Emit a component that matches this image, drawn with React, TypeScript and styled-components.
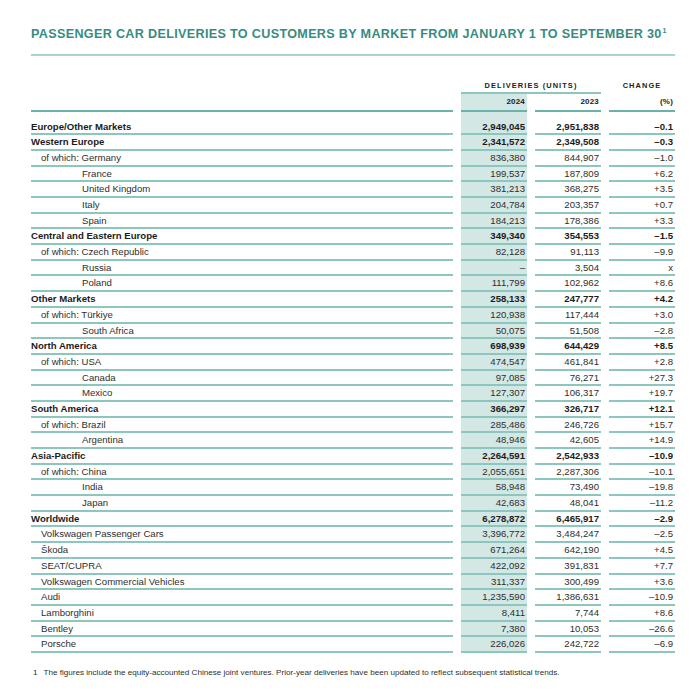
import React from "react";
import styled, { createGlobalStyle } from "styled-components";

const GlobalStyle = createGlobalStyle`
  body {
    margin: 0;
    background: #ffffff;
    font-family: "Liberation Sans", Arial, sans-serif;
    color: #2a2a2a;
  }
`;

const TEAL = "#368c81";
const LINE = "#8cc6be";
const HEAD_LINE = "#6cb2a8";
const SHADE = "#d3e7e4";

const Page = styled.div`
  width: 700px;
  box-sizing: border-box;
  padding: 27px 25px 0 31px;
`;

const Title = styled.h1`
  margin: 0;
  font-size: 12.6px;
  line-height: 15px;
  font-weight: 700;
  letter-spacing: 0.33px;
  color: ${TEAL};
  padding-bottom: 12px;
  border-bottom: 2px solid #a9d5cf;
  white-space: nowrap;
  sup {
    font-size: 7px;
    letter-spacing: 0;
    vertical-align: 5px;
    line-height: 0;
    margin-left: 1px;
  }
`;

const Grid = styled.div`
  display: grid;
  grid-template-columns: 422px 66px 66px 66px;
  column-gap: 8px;
  margin-top: 24px;
`;

const HeadCell = styled.div<{ $span?: number; $line?: boolean; $shade?: boolean; $tall?: boolean }>`
  grid-column: span ${(p) => p.$span ?? 1};
  font-size: ${(p) => (p.$tall ? "8px" : "7.4px")};
  font-weight: 700;
  letter-spacing: ${(p) => (p.$tall ? "0.2px" : "1.1px")};
  color: #222;
  text-align: ${(p) => (p.$tall ? "right" : "center")};
  line-height: ${(p) => (p.$tall ? "16px" : "12px")};
  padding: ${(p) => (p.$tall ? "0 2px 0 0" : "0")};
  background: ${(p) => (p.$shade ? SHADE : "transparent")};
  border-bottom: 2px solid ${(p) => (p.$line ? (p.$tall ? HEAD_LINE : LINE) : "transparent")};
`;

const Cell = styled.div<{ $shade?: boolean; $bold?: boolean; $num?: boolean; $indent?: number; $first?: boolean }>`
  font-size: 9.6px;
  line-height: 13.7px;
  height: 13.7px;
  white-space: nowrap;
  font-weight: ${(p) => (p.$bold ? 700 : 400)};
  color: ${(p) => (p.$bold ? "#1c1c1c" : "#2e2e2e")};
  text-align: ${(p) => (p.$num ? "right" : "left")};
  padding: ${(p) => (p.$first ? "7.6px" : "0")} ${(p) => (p.$num ? "2px" : "0")} 0
    ${(p) => p.$indent ?? 0}px;
  background: ${(p) => (p.$shade ? SHADE : "transparent")};
  border-bottom: 2px solid ${LINE};
`;

const Footnote = styled.div`
  display: flex;
  gap: 6px;
  margin-top: 15px;
  padding-left: 2px;
  font-size: 8.1px;
  line-height: 10px;
  color: #2e2e2e;
`;

type Row = [string, string, string, string, number, boolean];

// label, 2024, 2023, change, indent level, bold
const rows: Row[] = [
  ["Europe/Other Markets", "2,949,045", "2,951,838", "–0.1", 0, true],
  ["Western Europe", "2,341,572", "2,349,508", "–0.3", 0, true],
  ["of which: Germany", "836,380", "844,907", "–1.0", 1, false],
  ["France", "199,537", "187,809", "+6.2", 2, false],
  ["United Kingdom", "381,213", "368,275", "+3.5", 2, false],
  ["Italy", "204,784", "203,357", "+0.7", 2, false],
  ["Spain", "184,213", "178,386", "+3.3", 2, false],
  ["Central and Eastern Europe", "349,340", "354,553", "–1.5", 0, true],
  ["of which: Czech Republic", "82,128", "91,113", "–9.9", 1, false],
  ["Russia", "–", "3,504", "x", 2, false],
  ["Poland", "111,799", "102,962", "+8.6", 2, false],
  ["Other Markets", "258,133", "247,777", "+4.2", 0, true],
  ["of which: Türkiye", "120,938", "117,444", "+3.0", 1, false],
  ["South Africa", "50,075", "51,508", "–2.8", 2, false],
  ["North America", "698,939", "644,429", "+8.5", 0, true],
  ["of which: USA", "474,547", "461,841", "+2.8", 1, false],
  ["Canada", "97,085", "76,271", "+27.3", 2, false],
  ["Mexico", "127,307", "106,317", "+19.7", 2, false],
  ["South America", "366,297", "326,717", "+12.1", 0, true],
  ["of which: Brazil", "285,486", "246,726", "+15.7", 1, false],
  ["Argentina", "48,946", "42,605", "+14.9", 2, false],
  ["Asia-Pacific", "2,264,591", "2,542,933", "–10.9", 0, true],
  ["of which: China", "2,055,651", "2,287,306", "–10.1", 1, false],
  ["India", "58,948", "73,490", "–19.8", 2, false],
  ["Japan", "42,683", "48,041", "–11.2", 2, false],
  ["Worldwide", "6,278,872", "6,465,917", "–2.9", 0, true],
  ["Volkswagen Passenger Cars", "3,396,772", "3,484,247", "–2.5", 1, false],
  ["Škoda", "671,264", "642,190", "+4.5", 1, false],
  ["SEAT/CUPRA", "422,092", "391,831", "+7.7", 1, false],
  ["Volkswagen Commercial Vehicles", "311,337", "300,499", "+3.6", 1, false],
  ["Audi", "1,235,590", "1,386,631", "–10.9", 1, false],
  ["Lamborghini", "8,411", "7,744", "+8.6", 1, false],
  ["Bentley", "7,380", "10,053", "–26.6", 1, false],
  ["Porsche", "226,026", "242,722", "–6.9", 1, false],
];

const indents = [0, 10, 51];

export default function App() {
  return (
    <Page>
      <GlobalStyle />
      <Title>
        PASSENGER CAR DELIVERIES TO CUSTOMERS BY MARKET FROM JANUARY 1 TO SEPTEMBER 30<sup>1</sup>
      </Title>
      <Grid>
        <HeadCell />
        <HeadCell $span={2} $line>
          DELIVERIES (UNITS)
        </HeadCell>
        <HeadCell>CHANGE</HeadCell>

        <HeadCell $tall $line />
        <HeadCell $tall $line $shade>
          2024
        </HeadCell>
        <HeadCell $tall $line>
          2023
        </HeadCell>
        <HeadCell $tall $line>
          (%)
        </HeadCell>

        {rows.map(([label, a, b, c, level, bold], i) => (
          <React.Fragment key={label}>
            <Cell $bold={bold} $indent={indents[level]} $first={i === 0}>
              {label}
            </Cell>
            <Cell $bold={bold} $num $shade $first={i === 0}>
              {a}
            </Cell>
            <Cell $bold={bold} $num $first={i === 0}>
              {b}
            </Cell>
            <Cell $bold={bold} $num $first={i === 0}>
              {c}
            </Cell>
          </React.Fragment>
        ))}
      </Grid>
      <Footnote>
        <span>1</span>
        <span>
          The figures include the equity-accounted Chinese joint ventures. Prior-year deliveries
          have been updated to reflect subsequent statistical trends.
        </span>
      </Footnote>
    </Page>
  );
}
